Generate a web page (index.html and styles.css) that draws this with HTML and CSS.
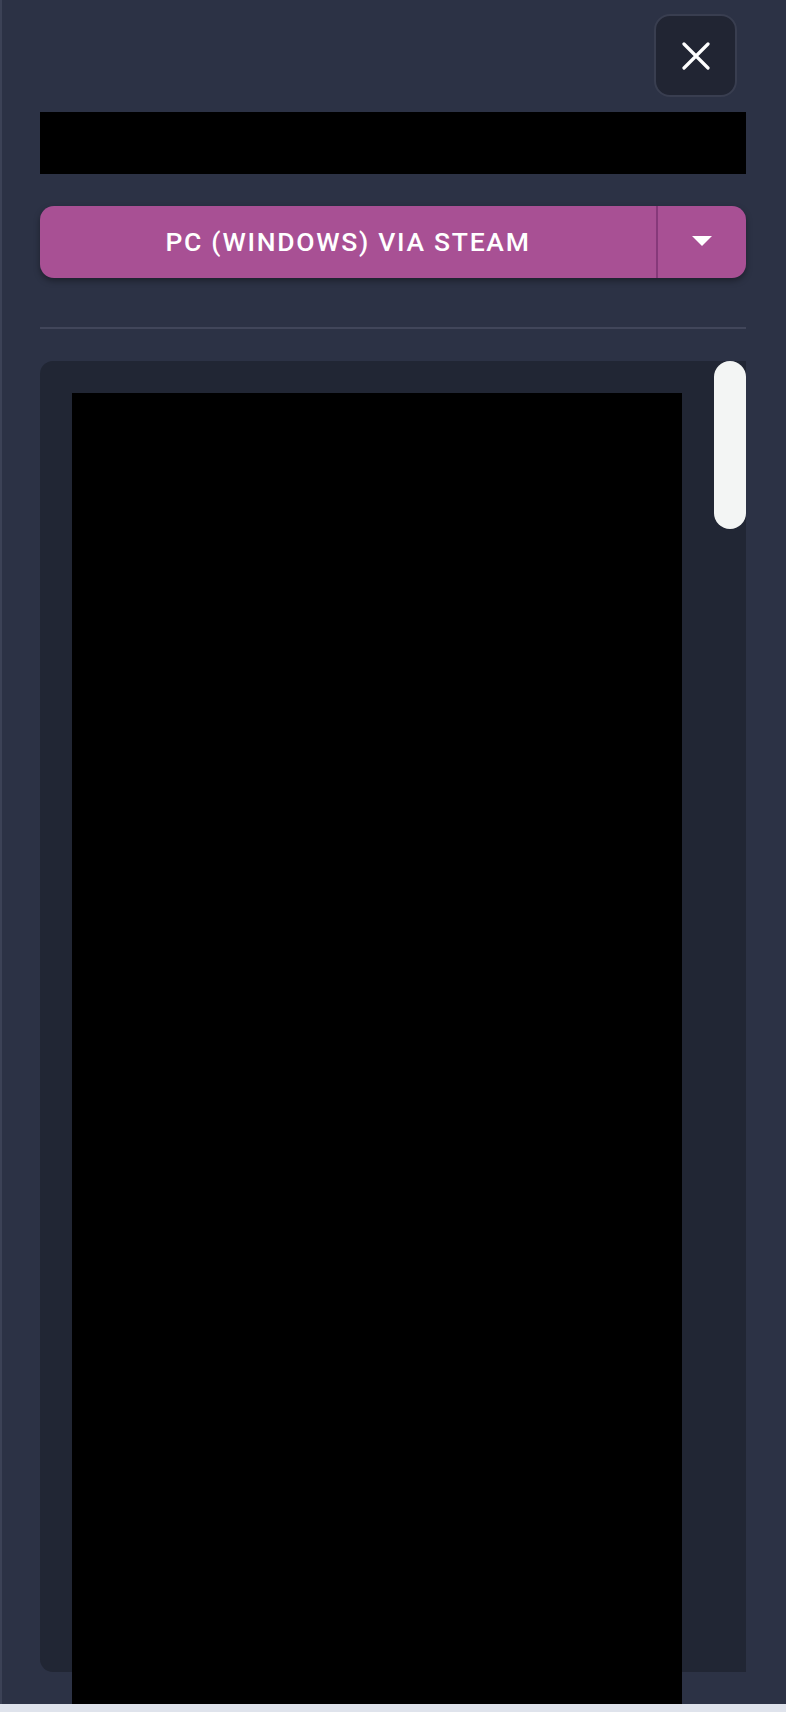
FILE: index.html
```html
<!DOCTYPE html>
<html lang="en">
<head>
<meta charset="utf-8">
<title>Platform</title>
<link rel="stylesheet" href="styles.css">
</head>
<body>
<div class="page">
  <div class="header">
    <button class="close" aria-label="Close">
      <svg width="28" height="28" viewBox="0 0 28 28"><path d="M2 2 L26 26 M26 2 L2 26" stroke="#ffffff" stroke-width="3.2" stroke-linecap="round" fill="none"/></svg>
    </button>
  </div>
  <div class="title-bar"></div>
  <div class="split-button">
    <div class="split-main">PC (WINDOWS) VIA STEAM</div>
    <div class="split-sep"></div>
    <div class="split-arrow"><span class="tri"></span></div>
  </div>
  <div class="divider"></div>
  <div class="panel">
    <div class="panel-content"></div>
    <div class="thumb"></div>
  </div>
</div>
<div class="bottom-bar"></div>
</body>
</html>
```
FILE: styles.css
```css
html, body {
  margin: 0;
  padding: 0;
}
body {
  width: 786px;
  height: 1712px;
  overflow: hidden;
  background: #2c3245;
  font-family: Roboto, "Liberation Sans", sans-serif;
}
.page {
  height: 1704px;
  box-sizing: border-box;
  border-left: 2px solid #3c4256;
  padding: 14px 40px 0 38px;
  overflow: hidden;
  display: flex;
  flex-direction: column;
}
.header {
  display: flex;
  justify-content: flex-end;
  padding-right: 9px;
}
.close {
  width: 83px;
  height: 83px;
  box-sizing: border-box;
  margin: 0;
  padding: 0;
  border: 2px solid #393e50;
  border-radius: 16px;
  background: #212533;
  display: flex;
  align-items: center;
  justify-content: center;
}
.close svg { display: block; }
.title-bar {
  margin-top: 15px;
  height: 62px;
  background: #000;
}
.split-button {
  margin-top: 32px;
  height: 72px;
  display: flex;
  background: #a85094;
  border-radius: 14px;
  box-shadow: 0 3px 6px rgba(0, 0, 0, 0.35);
}
.split-main {
  flex: 1;
  display: flex;
  align-items: center;
  justify-content: center;
  color: #ffffff;
  font-size: 26.5px;
  font-weight: 500;
  letter-spacing: 1.7px;
  padding-bottom: 1px;
}
.split-sep {
  width: 2px;
  background: #86397a;
}
.split-arrow {
  width: 88px;
  display: flex;
  align-items: center;
  justify-content: center;
}
.tri {
  width: 0;
  height: 0;
  border-left: 10px solid transparent;
  border-right: 10px solid transparent;
  border-top: 10px solid #ffffff;
  margin-bottom: 2px;
}
.divider {
  margin-top: 49px;
  height: 2px;
  background: #41465a;
}
.panel {
  position: relative;
  margin-top: 32px;
  height: 1311px;
  flex: none;
  background: #212634;
  border-radius: 13px 0 0 13px;
  padding: 32px 64px 0 32px;
  box-sizing: border-box;
}
.panel-content {
  width: 610px;
  height: 1311px;
  background: #000;
}
.thumb {
  position: absolute;
  top: 0;
  right: 0;
  width: 32px;
  height: 168px;
  border-radius: 16px;
  background: #f3f5f4;
}
.bottom-bar {
  height: 8px;
  background: #dfe3ec;
}
```
